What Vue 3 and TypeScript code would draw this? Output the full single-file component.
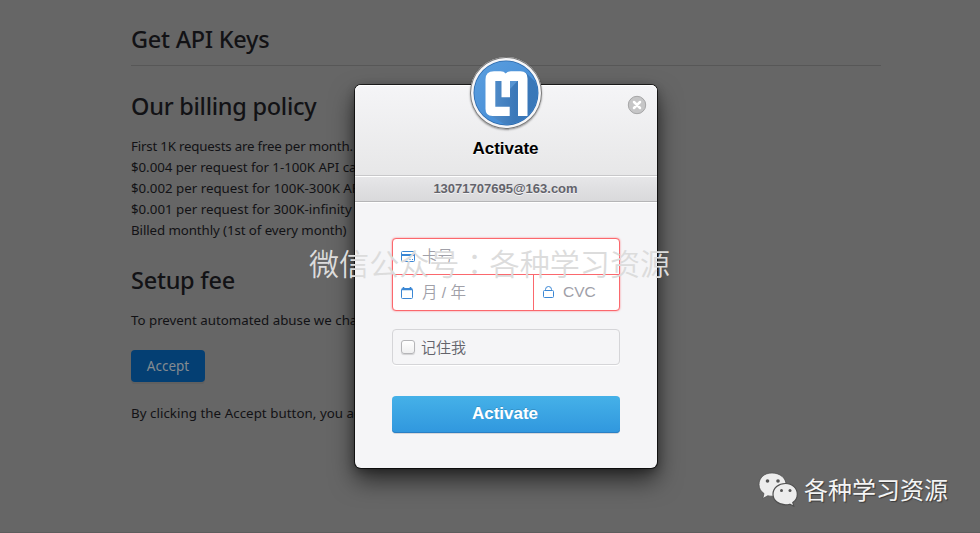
<script setup lang="ts">
const prices: string[] = [
  'First 1K requests are free per month.',
  '$0.004 per request for 1-100K API calls',
  '$0.002 per request for 100K-300K API calls',
  '$0.001 per request for 300K-infinity API calls',
  'Billed monthly (1st of every month)',
]
</script>

<template>
  <div class="screen">
    <main class="page">
      <h1 class="title">Get API Keys</h1>
      <h2 class="policy">Our billing policy</h2>
      <ul class="prices">
        <li v-for="(p, i) in prices" :key="p" :class="'price-' + i">{{ p }}</li>
      </ul>
      <h2 class="setup">Setup fee</h2>
      <p class="note prevent">To prevent automated abuse we charge</p>
      <button class="accept">Accept</button>
      <p class="note terms">By clicking the Accept button, you agree</p>
    </main>

    <section class="modal">
      <header class="head">
        <h3>Activate</h3>
        <div class="logo">
          <svg viewBox="0 0 72 72" width="72" height="72">
            <defs>
              <linearGradient id="disc" x1="0" y1="0" x2="1" y2="1">
                <stop offset="0" stop-color="#5b9fdf" />
                <stop offset="1" stop-color="#3f87d3" />
              </linearGradient>
              <linearGradient id="shade" x1="0" y1="0" x2="1" y2="0">
                <stop offset="0" stop-color="#5590cc" />
                <stop offset=".5" stop-color="#3b78b9" />
                <stop offset="1" stop-color="#3877b8" />
              </linearGradient>
              <clipPath id="round"><circle cx="36" cy="36" r="31.5" /></clipPath>
            </defs>
            <circle cx="36" cy="36" r="32.5" fill="#2b68aa" />
            <circle cx="36" cy="36" r="31.7" fill="url(#disc)" />
            <g clip-path="url(#round)">
              <path d="M55 15 72 31V72H42L18 57 25 47V24H48Z" fill="url(#shade)" />
              <path d="M40 24H47.500L40 32Z" fill="#5794d2" />
            </g>
            <path
              d="M24 14.300H30.500Q34 14.300 35.700 16.500 37.400 14.300 41 14.300H50.500Q57.500 14.300 57.500 21.500V59H48V24H40V40.300H31.500V24H25.300V49.800H39.700V59H22.500Q15.500 59 15.500 52V22.500Q15.500 14.300 24 14.300Z"
              fill="#fff"
            />
          </svg>
        </div>
        <button class="close" aria-label="Close">
          <svg viewBox="0 0 20 20" width="20" height="20">
            <circle cx="10" cy="10" r="8.700" fill="#c6c6c7" stroke="#a6a6a7" />
            <path d="M7 7l6 6M13 7l-6 6" stroke="#fff" stroke-width="2.500" stroke-linecap="round" />
          </svg>
        </button>
      </header>
      <div class="account">13071707695@163.com</div>
      <form class="body" @submit.prevent>
        <div class="card">
          <label class="field number">
            <svg viewBox="0 0 15 12" width="15" height="12" fill="none" stroke="#3b87d4">
              <rect x=".5" y=".5" width="13" height="10" rx="1" />
              <path d="M1 4h12" stroke-width="2" />
              <path d="M8.500 8.500h1M11 8.500h1" />
            </svg>
            <span>卡号</span>
          </label>
          <div class="pair">
            <label class="field expiry">
              <svg viewBox="0 0 12 12" width="12" height="12" fill="none" stroke="#3b87d4">
                <rect x=".5" y="1.500" width="11" height="10" rx="1" />
                <path d="M1 2.500h10M2.500 0v3M9.500 0v3" stroke-width="1.600" />
              </svg>
              <span>月 / 年</span>
            </label>
            <label class="field cvc">
              <svg viewBox="0 0 12 13" width="12" height="13" fill="none" stroke="#3b87d4">
                <rect x=".5" y="4.500" width="10" height="7" rx="1" />
                <path d="M2.500 4.500V3.500a3 3 0 0 1 6 0v1" />
              </svg>
              <span>CVC</span>
            </label>
          </div>
        </div>
        <label class="remember"><i class="box"></i><span>记住我</span></label>
        <button class="activate">Activate</button>
      </form>
    </section>

    <div class="watermark">微信公众号<span class="colon">：</span>各种学习资源</div>
    <div class="signature">
      <svg viewBox="0 0 40 35" width="40" height="35">
        <path
          d="M14 1C6 1 1 6 1 12.500c0 4 2 7 5 9L4.800 26.500l5-2.800c1.500.4 3 .5 4.700.5C22 24.200 28 19 28 12.500S22 1 14 1Z"
          fill="#ededed"
          stroke="#4b4b4b"
          stroke-width=".7"
        />
        <path
          d="M27.500 11.500c-7 0-12.500 4.600-12.500 10.700s5.500 10.600 12.500 10.600c1.500 0 3-.2 4.300-.6l4 2-1-3.600c2.800-2 4.500-5 4.500-8.400 0-6-5-10.700-11.800-10.700Z"
          fill="#ededed"
          stroke="#505050"
          stroke-width="1.200"
        />
        <g fill="#555">
          <circle cx="9.500" cy="9" r="1.800" /><circle cx="20" cy="9" r="1.800" />
          <circle cx="23.500" cy="18.500" r="1.500" /><circle cx="32" cy="18.500" r="1.500" />
        </g>
      </svg>
      <span>各种学习资源</span>
    </div>
  </div>
</template>

<style>
body {
  margin: 0;
  overflow: hidden;
}
</style>

<style scoped>
* {
  box-sizing: border-box;
}
.screen {
  position: relative;
  width: 980px;
  height: 533px;
  overflow: hidden;
  background: #666;
  border-bottom: 1px solid #5d5d5d;
}
.page {
  width: 750px;
  margin-left: 131px;
  font-family: 'Noto Sans', 'Open Sans', sans-serif;
  color: #121215;
  white-space: nowrap;
}
h1,
h2,
h3,
p,
ul {
  margin: 0;
  padding: 0;
}
h1,
h2 {
  font-size: 23.5px;
  font-weight: 500;
  line-height: 32px;
  letter-spacing: -0.26px;
}
.title {
  height: 66px;
  padding-top: 23px;
  border-bottom: 1px solid #575757;
}
.policy {
  margin-top: 24px;
}
.prices {
  list-style: none;
  margin-top: 14px;
  font-size: 13.3px;
  line-height: 21px;
}
.price-0 {
  letter-spacing: -0.2px;
}
.price-1 {
  letter-spacing: -0.05px;
}
.price-4 {
  letter-spacing: -0.09px;
}
.setup {
  margin-top: 23px;
}
.note {
  font-size: 13.3px;
  line-height: 21px;
}
.prevent {
  margin-top: 14px;
}
.accept {
  display: block;
  width: 74px;
  height: 32px;
  margin-top: 19px;
  padding: 0;
  border: 0;
  border-radius: 4px;
  background: #043f73;
  box-shadow: 0 2px 0 #606060;
  color: #858b90;
  font: 13.5px 'Noto Sans', sans-serif;
}
.terms {
  margin-top: 21px;
  letter-spacing: 0.05px;
}
.modal {
  position: absolute;
  left: 355px;
  top: 85px;
  width: 302px;
  height: 383px;
  border-radius: 6px;
  background: #f5f5f7;
  box-shadow: 0 0 0 1px rgba(0, 0, 0, 0.7), 0 12px 25px rgba(0, 0, 0, 0.6), 0 3px 10px rgba(0, 0, 0, 0.3);
  font-family: 'Liberation Sans', 'Noto Sans CJK SC', sans-serif;
}
.head {
  position: relative;
  height: 91px;
  padding-top: 54px;
  border-radius: 6px 6px 0 0;
  border-bottom: 1px solid #c8c8ca;
  background: linear-gradient(#f5f5f7, #e7e7e8);
  box-shadow: inset 0 1px #fff;
  text-align: center;
}
.head h3 {
  font-size: 17px;
  line-height: 20px;
  color: #000;
  text-shadow: 0 1px #fff;
  padding-right: 1px;
}
.logo {
  position: absolute;
  left: 115px;
  top: -28px;
  width: 72px;
  height: 72px;
  border-radius: 50%;
  background: #f6f6f8;
  box-shadow: inset 0 0 0 1px #777, 0 1px 2px rgba(0, 0, 0, 0.4);
}
.logo svg,
.close svg {
  display: block;
}
.close {
  position: absolute;
  right: 10px;
  top: 10px;
  width: 20px;
  height: 20px;
  padding: 0;
  border: 0;
  border-radius: 50%;
  background: none;
}
.account {
  height: 26px;
  padding-right: 1px;
  border-top: 1px solid #fff;
  border-bottom: 1px solid #b5b5b7;
  background: linear-gradient(#e6e6e8, #d9d9db);
  box-shadow: 0 1px #fff;
  color: #63636b;
  font-size: 13px;
  font-weight: bold;
  line-height: 23px;
  text-align: center;
  text-shadow: 0 1px rgba(255, 255, 255, 0.6);
}
.body {
  display: flex;
  flex-direction: column;
  padding: 36px 37px 0;
}
.card {
  height: 73px;
  border: 1px solid #fb686d;
  border-radius: 4px;
  background: #fff;
  box-shadow: 0 0 2px #ff7c80;
}
.field {
  display: flex;
  align-items: center;
  font-size: 15.5px;
  color: #a0a0a8;
}
.field span {
  padding-bottom: 3px;
  font-weight: 350;
}
.number {
  height: 36px;
  padding-left: 8px;
  gap: 6px;
  border-bottom: 1px solid #fb686d;
}
.pair {
  display: flex;
  height: 35px;
}
.expiry {
  width: 141px;
  padding-left: 8px;
  gap: 9px;
  border-right: 1px solid #fb686d;
}
.cvc {
  padding-left: 9px;
  gap: 8px;
}
.cvc span {
  padding-bottom: 1px;
}
.remember {
  display: flex;
  align-items: center;
  gap: 6px;
  height: 36px;
  margin-top: 18px;
  padding-left: 8px;
  border: 1px solid #d5d5d8;
  border-radius: 4px;
  box-shadow: 0 1px #fff;
  font-size: 15px;
  color: #63636b;
}
.remember span {
  padding-bottom: 2px;
  font-weight: 350;
}
.box {
  width: 14px;
  height: 14px;
  border: 1px solid #b5b5b8;
  border-radius: 3px;
  background: linear-gradient(#fff, #efeff0);
  box-shadow: 0 1px 1px rgba(0, 0, 0, 0.15);
}
.activate {
  height: 37px;
  margin-top: 31px;
  padding: 0 2px 2px 0;
  border: 0;
  border-radius: 4px;
  background: linear-gradient(#45b1e8, #3097de);
  box-shadow: inset 0 -1px #2a7fc4, 0 1px rgba(0, 0, 0, 0.12);
  color: #fff;
  font: bold 17px 'Liberation Sans', sans-serif;
  text-shadow: 0 -1px rgba(0, 0, 0, 0.15);
}
.watermark {
  position: absolute;
  left: 309px;
  top: 240px;
  font: 350 30.1px/44px 'Noto Sans CJK SC', sans-serif;
  color: #dcdcdc;
  white-space: nowrap;
}
.colon {
  font-family: 'Noto Sans CJK TC', sans-serif;
}
.signature {
  position: absolute;
  left: 758px;
  top: 471px;
  display: flex;
  align-items: center;
  gap: 6px;
  font: 24px/35px 'Noto Sans CJK SC', sans-serif;
  color: #f4f4f4;
  text-shadow: 1px 1px 1px #3a3a3a;
  white-space: nowrap;
}
.signature span {
  padding-bottom: 2px;
}
</style>
